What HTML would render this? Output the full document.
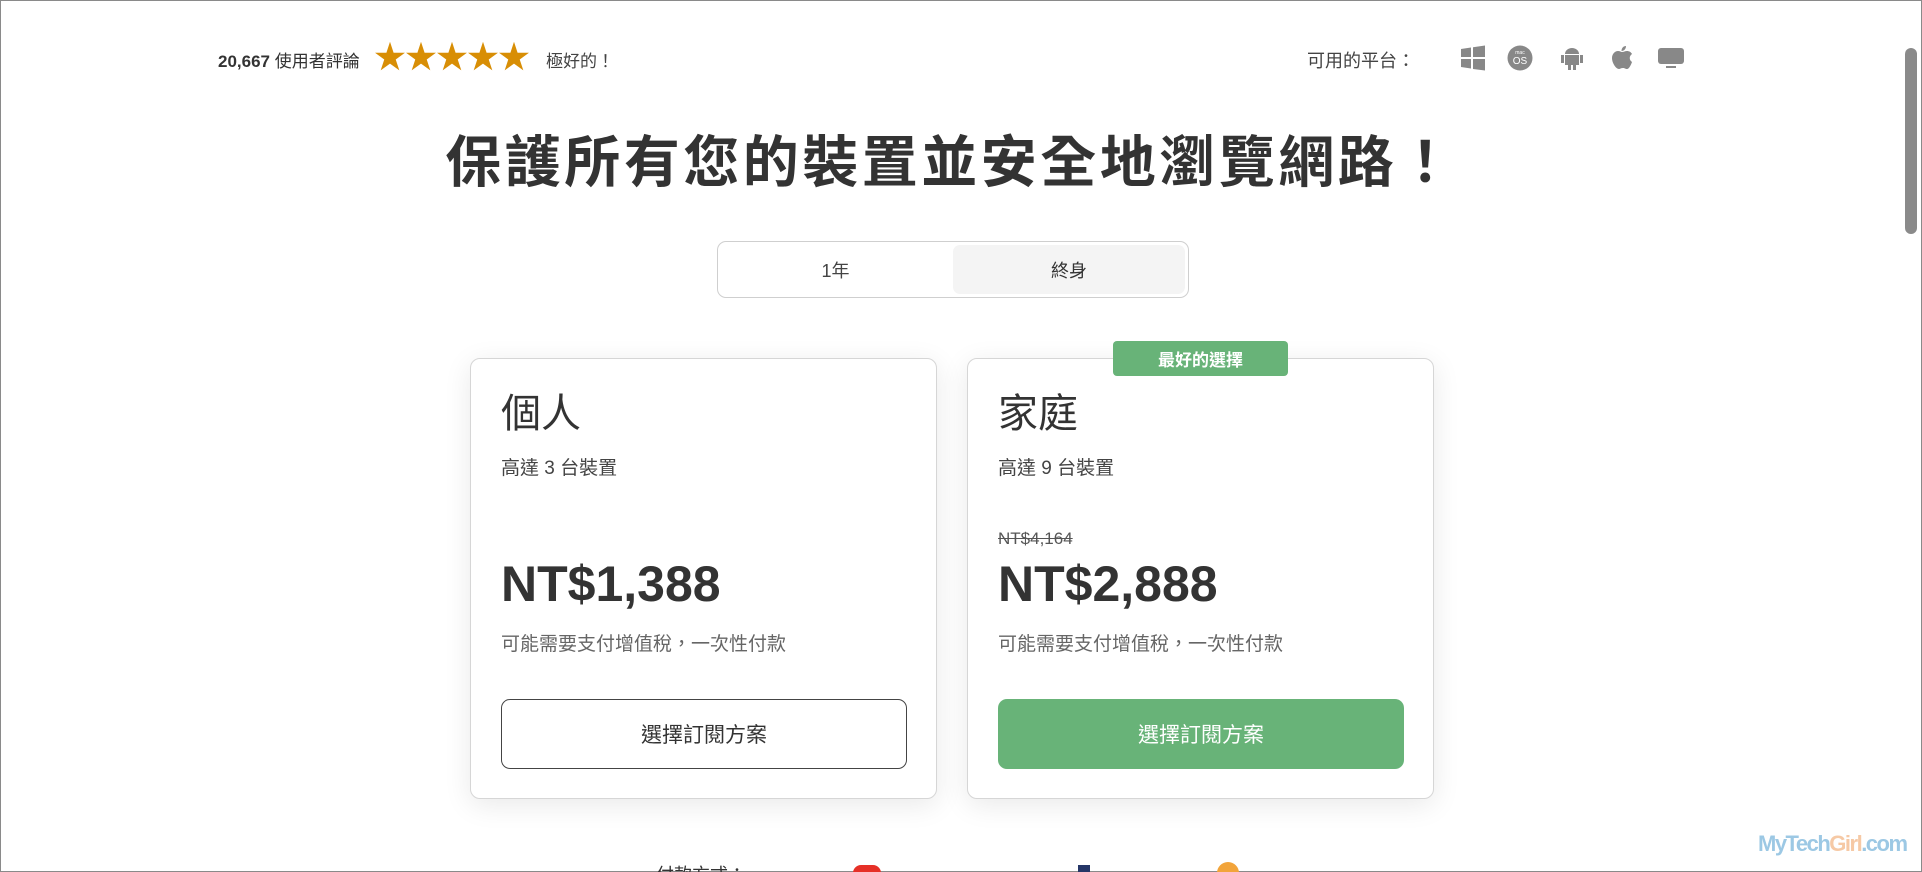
<!DOCTYPE html>
<html><head><meta charset="utf-8"><style>
*{margin:0;padding:0;box-sizing:border-box}
html,body{width:1922px;height:872px;overflow:hidden;background:#fff}
body{position:relative;font-family:"Liberation Sans","Noto Sans CJK TC",sans-serif;color:#333;border:1px solid #8a8a8a}
.a{position:absolute}
.card{position:absolute;top:357px;width:467px;height:441px;border:1px solid #d6d6d6;border-radius:10px;background:#fff;box-shadow:0 6px 28px rgba(0,0,0,.09)}
.t{position:absolute;left:30px;top:22px;font-size:40px;color:#333}
.s{position:absolute;left:30px;top:94px;font-size:19px;color:#444}
.st{position:absolute;left:30px;top:170px;font-size:17px;color:#555;text-decoration:line-through}
.p{position:absolute;left:30px;top:196px;font-size:50px;font-weight:bold;color:#333}
.n{position:absolute;left:30px;top:270px;font-size:19px;color:#666}
.b{position:absolute;left:30px;top:340px;width:406px;height:70px;border-radius:9px;font-size:21px;display:flex;align-items:center;justify-content:center}
.ic{position:absolute;top:44px;width:26px;height:26px}
</style></head><body>
<div class="a" style="left:217px;top:46px;font-size:17px;font-weight:bold;color:#333">20,667 <span style="font-weight:normal">使用者評論</span></div>
<div class="a" style="left:373px;top:39px;font-size:32px;color:#d88e05;letter-spacing:-1px;line-height:34px">★★★★★</div>
<div class="a" style="left:545px;top:46px;font-size:17px;color:#444">極好的！</div>
<div class="a" style="left:1306px;top:46px;font-size:18px;color:#444">可用的平台：</div>
<svg class="ic" style="left:1459px" viewBox="0 0 26 26"><path d="M1 4l10-1.5V12H1zM13 2.2L25 .5V12H13zM1 14h10v9.5L1 22zM13 14h12v11.5L13 24z" fill="#888"/></svg>
<svg class="ic" style="left:1506px" viewBox="0 0 26 26"><circle cx="13" cy="13" r="12.5" fill="#888"/><text x="13" y="9" font-size="5" fill="#fff" text-anchor="middle" font-family="Liberation Sans">mac</text><text x="13" y="19" font-size="10" fill="#fff" text-anchor="middle" font-family="Liberation Sans">OS</text></svg>
<svg class="ic" style="left:1558px" viewBox="0 0 26 26"><path d="M6 9a7 6 0 0114 0zM6 10h14v10H6zM2 10h3v8H2zM21 10h3v8h-3zM9 20h3v5H9zM14 20h3v5h-3z" fill="#888"/></svg>
<svg class="ic" style="left:1608px" viewBox="0 0 26 26"><path d="M17 1c0 3-2 5-4.5 5 0-3 2-5 4.5-5zM13 7c2 0 3-1 5-1 2 0 4 1 5 3-3 2-3 6 0 8-1 3-3 7-5 7-2 0-2-1-4-1s-3 1-4 1c-3 0-7-6-7-11 0-4 3-7 6-7 2 0 3 1 4 1z" fill="#888"/></svg>
<svg class="ic" style="left:1657px" viewBox="0 0 26 26"><rect x="0" y="3" width="26" height="16" rx="3" fill="#888"/><rect x="8" y="21" width="10" height="2" fill="#888"/></svg>
<div class="a" style="left:0;width:1900px;top:117px;text-align:center;font-size:56px;font-weight:bold;color:#333;letter-spacing:3.5px">保護所有您的裝置並安全地瀏覽網路！</div>
<div class="a" style="left:716px;top:240px;width:472px;height:57px;border:1px solid #cfcfcf;border-radius:9px">
<div class="a" style="left:0;top:0;width:235px;height:55px;display:flex;align-items:center;justify-content:center;font-size:18px;color:#444">1年</div>
<div class="a" style="left:235px;top:3px;width:232px;height:49px;background:#f4f4f4;border-radius:7px;display:flex;align-items:center;justify-content:center;font-size:18px;color:#333">終身</div>
</div>
<div class="card" style="left:469px">
<div class="t">個人</div><div class="s">高達 3 台裝置</div>
<div class="p">NT$1,388</div><div class="n">可能需要支付增值稅，一次性付款</div>
<div class="b" style="border:1px solid #444;color:#333">選擇訂閱方案</div></div>
<div class="card" style="left:966px">
<div class="t">家庭</div><div class="s">高達 9 台裝置</div><div class="st">NT$4,164</div>
<div class="p">NT$2,888</div><div class="n">可能需要支付增值稅，一次性付款</div>
<div class="b" style="background:#68b378;color:#fff">選擇訂閱方案</div></div>
<div class="a" style="left:1112px;top:340px;width:175px;height:35px;background:#68b378;border-radius:4px;color:#fff;font-size:17px;font-weight:bold;display:flex;align-items:center;justify-content:center">最好的選擇</div>
<div class="a" style="left:655px;top:860px;font-size:18px;color:#333">付款方式：</div>
<div class="a" style="left:852px;top:864px;width:28px;height:16px;border-radius:8px;background:#e63027"></div>
<div class="a" style="left:1077px;top:864px;width:12px;height:12px;background:#253667"></div>
<div class="a" style="left:1216px;top:861px;width:22px;height:22px;border-radius:11px;background:#f2a43a"></div>
<div class="a" style="left:1757px;top:830px;font-size:22px;font-weight:bold;color:#9cc8e4;letter-spacing:-1.5px">MyTech<span style="color:#f6c9a5">Girl</span>.com</div>
<div class="a" style="left:1904px;top:47px;width:12px;height:186px;border-radius:6px;background:#8a8a8a"></div>
</body></html>
